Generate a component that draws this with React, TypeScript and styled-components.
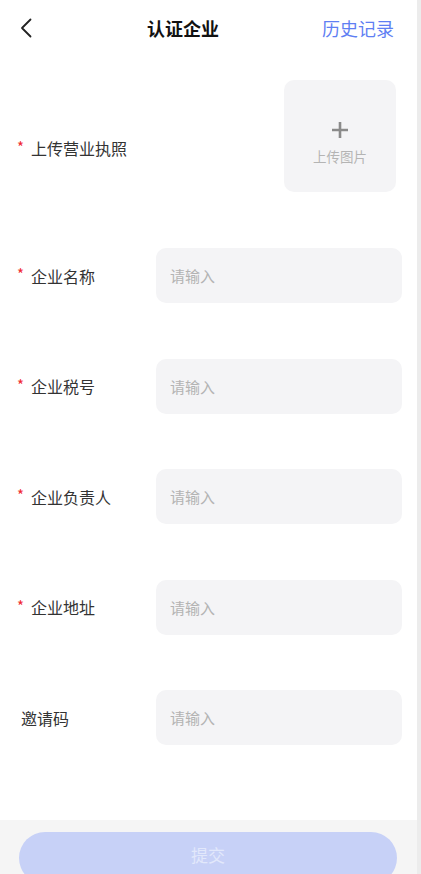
import React from 'react'
import styled, { createGlobalStyle } from 'styled-components'

const GlobalStyle = createGlobalStyle`
  html, body {
    margin: 0;
    padding: 0;
    background: #ffffff;
    font-family: "Noto Sans CJK SC", "Noto Sans", sans-serif;
  }
  * { box-sizing: border-box; }
`

interface Field {
  label: string
  required: boolean
}

const fields: Field[] = [
  { label: '企业名称', required: true },
  { label: '企业税号', required: true },
  { label: '企业负责人', required: true },
  { label: '企业地址', required: true },
  { label: '邀请码', required: false },
]

const App: React.FC = () => {
  return (
    <Page>
      <GlobalStyle />
      <Screen>
        <Header>
          <BackButton aria-label="返回">
            <svg width="12" height="20" viewBox="0 0 12 20" fill="none">
              <path d="M10.5 1.5L2 10l8.5 8.5" stroke="#222" strokeWidth="1.8" strokeLinecap="round" strokeLinejoin="round" />
            </svg>
          </BackButton>
          <Title>认证企业</Title>
          <HistoryLink>历史记录</HistoryLink>
        </Header>

        <Form>
          <UploadRow>
            <Label required offset={24}>上传营业执照</Label>
            <UploadBox>
              <svg width="18" height="18" viewBox="0 0 18 18">
                <path d="M9 1v16M1 9h16" stroke="#8a8a8a" strokeWidth="2.6" />
              </svg>
              <UploadText>上传图片</UploadText>
            </UploadBox>
          </UploadRow>

          {fields.map(field => (
            <FieldRow key={field.label}>
              <Label required={field.required}>{field.label}</Label>
              <Input placeholder="请输入" />
            </FieldRow>
          ))}
        </Form>

        <Footer>
          <SubmitButton disabled>提交</SubmitButton>
        </Footer>
      </Screen>
      <ScrollTrack />
    </Page>
  )
}

export default App

const Page = styled.div`
  display: flex;
  width: 421px;
  height: 874px;
  overflow: hidden;
`

const Screen = styled.div`
  flex: 1;
  display: flex;
  flex-direction: column;
  background: #ffffff;
`

const ScrollTrack = styled.div`
  width: 4px;
  background: #ececec;
`

const Header = styled.div`
  height: 56px;
  display: flex;
  align-items: center;
  padding: 0 23px 0 20px;
`

const BackButton = styled.button`
  border: none;
  background: none;
  padding: 0;
  width: 40px;
  display: flex;
  align-items: center;
  cursor: pointer;
`

const Title = styled.h1`
  margin: 0 0 0 87px;
  font-size: 18px;
  font-weight: 700;
  color: #111;
`

const HistoryLink = styled.span`
  margin-left: auto;
  font-size: 18px;
  color: #5f7ff3;
`

const Form = styled.div`
  flex: 1;
  display: flex;
  flex-direction: column;
  padding: 24px 15px 0 17px;
`

const UploadRow = styled.div`
  display: flex;
  align-items: center;
  justify-content: space-between;
  padding-right: 6px;
  height: 112px;
  margin-bottom: 56px;
`

const FieldRow = styled.div`
  display: flex;
  align-items: center;
  height: 55px;
  margin-bottom: 55.5px;
`

const Label = styled.div<{ required?: boolean; offset?: number }>`
  width: 139px;
  flex-shrink: 0;
  font-size: 16px;
  color: #333;
  display: flex;
  align-items: center;
  margin-top: ${p => p.offset ?? 0}px;
  padding-left: ${p => (p.required ? '0' : '4px')};

  &::before {
    content: '*';
    display: ${p => (p.required ? 'inline-block' : 'none')};
    color: #f0292f;
    font-size: 15px;
    width: 14px;
    margin-top: -4px;
  }
`

const UploadBox = styled.div`
  width: 112px;
  height: 112px;
  border-radius: 10px;
  background: #f4f4f6;
  display: flex;
  flex-direction: column;
  align-items: center;
  justify-content: center;
  gap: 7px;
  padding-top: 14px;
`

const UploadText = styled.span`
  font-size: 13.5px;
  color: #b4b4b4;
`

const Input = styled.input`
  flex: 1;
  height: 55px;
  border: none;
  outline: none;
  border-radius: 10px;
  background: #f4f4f6;
  padding: 0 14px;
  font-size: 15px;
  font-family: inherit;
  color: #333;

  &::placeholder {
    color: #b3b3b3;
  }
`

const Footer = styled.div`
  height: 54px;
  background: #f5f5f5;
  padding: 12px 20px 0 19px;
`

const SubmitButton = styled.button`
  width: 100%;
  height: 52px;
  border: none;
  border-radius: 26px;
  background: #c7d1f7;
  color: #e2e8fb;
  font-size: 17px;
  font-family: inherit;
  padding-bottom: 8px;
`
